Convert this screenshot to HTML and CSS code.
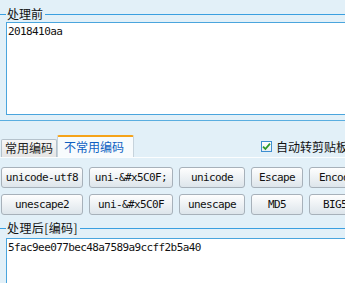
FILE: index.html
```html
<!DOCTYPE html>
<html lang="zh-CN">
<head>
    <meta charset="UTF-8">
    <title>编码转换</title>
    <link rel="stylesheet" href="styles.css">
</head>
<body>

<div class="group group-top">
    <div class="group-title"><span>处理前</span></div>
    <textarea class="box" readonly>2018410aa</textarea>
</div>

<div class="tabs">
    <div class="tab">常用编码</div>
    <div class="tab active">不常用编码</div>
    <label class="auto">
        <span class="check">
            <svg width="9" height="9" viewBox="0 0 9 9"><path d="M1 4.6 L3.4 7 L8 1.6" fill="none" stroke="#2f9a2a" stroke-width="1.8"/></svg>
        </span>
        <span>自动转剪贴板</span>
    </label>
</div>

<div class="panel">
    <button class="btn">unicode-utf8</button>
    <button class="btn">uni-&amp;#x5C0F;</button>
    <button class="btn">unicode</button>
    <button class="btn">Escape</button>
    <button class="btn btn-last">Encode</button>

    <button class="btn">unescape2</button>
    <button class="btn">uni-&amp;#x5C0F</button>
    <button class="btn">unescape</button>
    <button class="btn">MD5</button>
    <button class="btn btn-big5">BIG5</button>
</div>

<div class="group group-bottom">
    <div class="group-title"><span>处理后[编码]</span></div>
    <textarea class="box box-out" readonly>5fac9ee077bec48a7589a9ccff2b5a40</textarea>
</div>

</body>
</html>
```

FILE: styles.css
```css
* {
    margin: 0;
    padding: 0;
    box-sizing: border-box;
}

html,
body {
    overflow: hidden;
}

body {
    width: 345px;
    height: 283px;
    background-color: #e2f0f8;
    font-family: "Noto Sans CJK SC", sans-serif;
    font-size: 12px;
    color: #111;
}

/* 分组框 */
.group {
    width: 345px;
}

.group-top {
    padding-bottom: 5px;
    border-bottom: 1px solid #5aaee0;
}

.group-title {
    display: flex;
    align-items: center;
    height: 16px;
    margin-top: 6px;
}

.group-bottom {
    margin-top: 3px;
}

.group-bottom .group-title {
    height: 20px;
    margin-top: 0;
}

.group-title::before {
    content: "";
    width: 6px;
    height: 1px;
    background-color: #3a9fe0;
}

.group-title span {
    padding: 0 2px 0 1px;
    line-height: 16px;
    white-space: nowrap;
}

.group-bottom .group-title span {
    letter-spacing: 0.4px;
}

.group-title::after {
    content: "";
    flex: 1;
    height: 1px;
    background-color: #3a9fe0;
}

.box {
    display: block;
    width: 360px;
    height: 93px;
    margin-left: 6px;
    padding: 2px 0 0 1px;
    border: 1px solid #4aa5dd;
    background-color: #fff;
    font-family: "DejaVu Sans Mono", monospace;
    font-size: 11px;
    line-height: 14px;
    letter-spacing: -0.6px;
    color: #111;
    resize: none;
    outline: none;
    overflow: hidden;
}

.box-out {
    height: 60px;
}

/* 选项卡 */
.tabs {
    display: flex;
    align-items: flex-end;
    height: 23px;
    margin-top: 14px;
    padding-left: 1px;
    border-bottom: 1px solid #fbfdfe;
    white-space: nowrap;
}

.tab {
    flex-shrink: 0;
    height: 18px;
    padding: 0 3px;
    border: 1px solid #b5c2cc;
    border-bottom: none;
    border-radius: 2px 2px 0 0;
    background: linear-gradient(#f7f7f7, #e5e5e5);
    line-height: 16px;
    color: #222;
}

.tab.active {
    height: 22px;
    padding: 0 9px 0 6px;
    border-color: #c6d3dc;
    border-top: 2px solid #f5a31a;
    background: #f7fbfd;
    line-height: 19px;
    color: #0e5fc2;
}

.auto {
    flex-shrink: 0;
    display: flex;
    align-items: center;
    align-self: center;
    margin-left: 127px;
}

.check {
    display: flex;
    align-items: center;
    justify-content: center;
    width: 11px;
    height: 11px;
    margin-right: 4px;
    border: 1px solid #3d8fd1;
    background: linear-gradient(#ffffff, #e8eef3);
}

/* 按钮 */
.panel {
    display: grid;
    grid-template-columns: 82px 84px 66px 52px 66px;
    column-gap: 6px;
    row-gap: 6px;
    padding: 9px 0 0 1px;
}

.btn {
    height: 21px;
    border: 1px solid #a7b1ba;
    border-radius: 3px;
    background: linear-gradient(#fefefe, #dde5eb);
    font-family: "DejaVu Sans Mono", monospace;
    font-size: 11px;
    line-height: 19px;
    letter-spacing: -0.6px;
    color: #111;
    text-align: center;
    white-space: nowrap;
    overflow: hidden;
}

.btn-last {
    text-align: left;
    padding-left: 9px;
}

.btn-big5 {
    width: 52px;
}
```
